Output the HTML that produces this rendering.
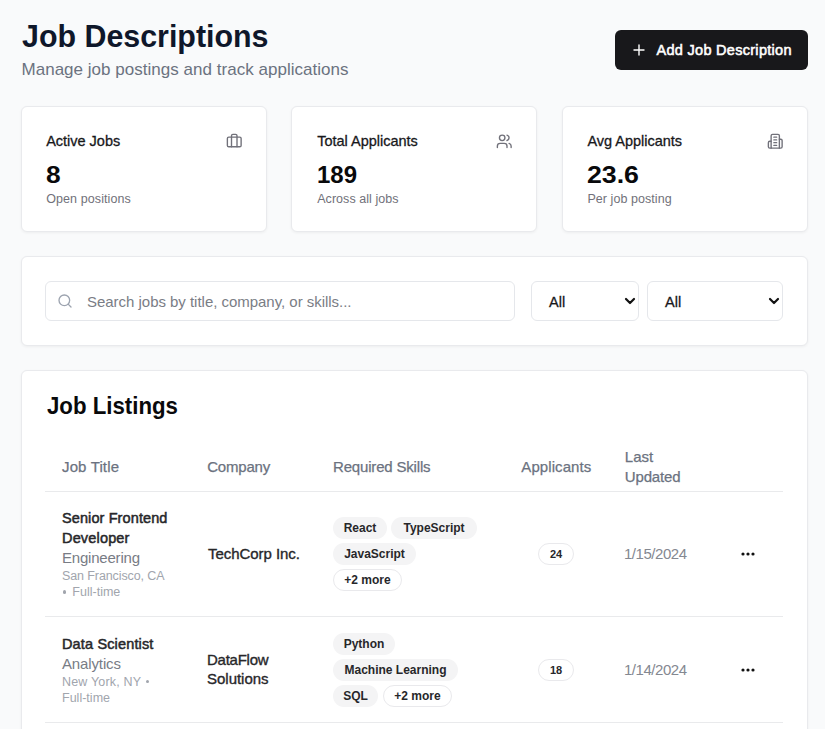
<!DOCTYPE html>
<html><head><meta charset="utf-8">
<style>
*{box-sizing:border-box;margin:0;padding:0}
html,body{width:825px;height:729px;overflow:hidden;background:#f9fafb;font-family:"Liberation Sans",sans-serif;color:#111827}
body{position:relative}
.abs{position:absolute}
.box{position:absolute}
.t{position:absolute;white-space:nowrap}
.card{position:absolute;background:#fff;border:1px solid #e9eaed;border-radius:6px;box-shadow:0 1px 3px rgba(0,0,0,0.05)}
.inp{position:absolute;border:1px solid #e5e7eb;border-radius:6px;background:#fff}
.b{position:absolute;height:22px;border-radius:11px;background:#f4f4f5;font-size:12px;font-weight:bold;color:#27272a;line-height:22px;text-align:center;white-space:nowrap}
.bo{background:#fff;border:1px solid #e9e9ec;line-height:20px}
</style></head>
<body>
<div class="t" style="left:21.50px;top:18px;font-size:31.5px;line-height:36px;font-weight:bold;color:#0f172a;transform:scaleX(0.9646);transform-origin:0.00px 0;">Job Descriptions</div>
<div class="t" style="left:21.50px;top:60px;font-size:17px;line-height:19px;color:#6b7280;letter-spacing:0.023px;">Manage job postings and track applications</div>
<div class="box" style="left:615px;top:30px;width:193px;height:40px;background:#18181b;border-radius:6px"></div>
<svg class="abs" style="left:633px;top:44px" width="12" height="12" viewBox="0 0 12 12"><path d="M6 1v10M1 6h10" stroke="#fff" stroke-width="1.4" stroke-linecap="round"/></svg>
<div class="t" style="left:656.50px;top:42px;font-size:14.5px;line-height:16px;color:#ffffff;letter-spacing:0.290px;-webkit-text-stroke:0.55px #ffffff;">Add Job Description</div>
<div class="card" style="left:21px;top:106px;width:246px;height:126px"></div>
<div class="t" style="left:46.20px;top:133px;font-size:14.5px;line-height:16px;color:#18181b;letter-spacing:-0.013px;-webkit-text-stroke:0.3px #18181b;">Active Jobs</div>
<div class="t" style="left:46.20px;top:161px;font-size:24px;line-height:27px;font-weight:bold;color:#09090b;transform:scaleX(1.0961);transform-origin:0.00px 0;">8</div>
<div class="t" style="left:46.20px;top:192px;font-size:12.5px;line-height:14px;color:#71717a;letter-spacing:0.094px;">Open positions</div>
<svg class="abs" style="left:226px;top:132.5px" width="16.5" height="16.5" viewBox="0 0 24 24" fill="none" stroke="#71717a" stroke-width="2" stroke-linecap="round" stroke-linejoin="round"><path d="M16 20V4a2 2 0 0 0-2-2h-4a2 2 0 0 0-2 2v16"/><rect width="20" height="14" x="2" y="6" rx="2"/></svg>
<div class="card" style="left:291px;top:106px;width:246px;height:126px"></div>
<div class="t" style="left:317.20px;top:133px;font-size:14.5px;line-height:16px;color:#18181b;letter-spacing:-0.012px;-webkit-text-stroke:0.3px #18181b;">Total Applicants</div>
<div class="t" style="left:317.20px;top:161px;font-size:24px;line-height:27px;font-weight:bold;color:#09090b;transform:scaleX(0.9995);transform-origin:0.00px 0;">189</div>
<div class="t" style="left:317.20px;top:192px;font-size:12.5px;line-height:14px;color:#71717a;letter-spacing:0.058px;">Across all jobs</div>
<svg class="abs" style="left:496px;top:132.5px" width="16.5" height="16.5" viewBox="0 0 24 24" fill="none" stroke="#71717a" stroke-width="2" stroke-linecap="round" stroke-linejoin="round"><path d="M16 21v-2a4 4 0 0 0-4-4H6a4 4 0 0 0-4 4v2"/><circle cx="9" cy="7" r="4"/><path d="M22 21v-2a4 4 0 0 0-3-3.87"/><path d="M16 3.13a4 4 0 0 1 0 7.75"/></svg>
<div class="card" style="left:562px;top:106px;width:246px;height:126px"></div>
<div class="t" style="left:587.40px;top:133px;font-size:14.5px;line-height:16px;color:#18181b;letter-spacing:-0.020px;-webkit-text-stroke:0.3px #18181b;">Avg Applicants</div>
<div class="t" style="left:587.40px;top:161px;font-size:24px;line-height:27px;font-weight:bold;color:#09090b;transform:scaleX(1.1125);transform-origin:0.00px 0;">23.6</div>
<div class="t" style="left:587.40px;top:192px;font-size:12.5px;line-height:14px;color:#71717a;letter-spacing:0.059px;">Per job posting</div>
<svg class="abs" style="left:767px;top:132.5px" width="16.5" height="16.5" viewBox="0 0 24 24" fill="none" stroke="#71717a" stroke-width="2" stroke-linecap="round" stroke-linejoin="round"><path d="M6 22V4a2 2 0 0 1 2-2h8a2 2 0 0 1 2 2v18Z"/><path d="M6 12H4a2 2 0 0 0-2 2v6a2 2 0 0 0 2 2h2"/><path d="M18 9h2a2 2 0 0 1 2 2v9a2 2 0 0 1-2 2h-2"/><path d="M10 6h4"/><path d="M10 10h4"/><path d="M10 14h4"/><path d="M10 18h4"/></svg>
<div class="card" style="left:21px;top:256px;width:787px;height:90px"></div>
<div class="inp" style="left:45px;top:281px;width:470px;height:40px"></div>
<svg class="abs" style="left:57px;top:293px" width="16" height="16" viewBox="0 0 24 24" fill="none" stroke="#9ca3af" stroke-width="2" stroke-linecap="round"><circle cx="11" cy="11" r="8"/><path d="m21 21-4.3-4.3"/></svg>
<div class="t" style="left:87.00px;top:293px;font-size:15px;line-height:17px;color:#7a7d85;letter-spacing:-0.027px;">Search jobs by title, company, or skills...</div>
<div class="inp" style="left:531px;top:281px;width:108px;height:40px"></div>
<div class="t" style="left:549.00px;top:294px;font-size:14.5px;line-height:16px;color:#18181b;-webkit-text-stroke:0.3px #18181b;">All</div>
<svg class="abs" style="left:624px;top:296px" width="12" height="10" viewBox="0 0 12 10"><path d="M2 3l4 4 4-4" fill="none" stroke="#111" stroke-width="2.2" stroke-linecap="round" stroke-linejoin="round"/></svg>
<div class="inp" style="left:647px;top:281px;width:136px;height:40px"></div>
<div class="t" style="left:665.00px;top:294px;font-size:14.5px;line-height:16px;color:#18181b;-webkit-text-stroke:0.3px #18181b;">All</div>
<svg class="abs" style="left:768px;top:296px" width="12" height="10" viewBox="0 0 12 10"><path d="M2 3l4 4 4-4" fill="none" stroke="#111" stroke-width="2.2" stroke-linecap="round" stroke-linejoin="round"/></svg>
<div class="card" style="left:21px;top:370px;width:787px;height:420px"></div>
<div class="t" style="left:47.00px;top:392px;font-size:24px;line-height:27px;font-weight:bold;color:#09090b;transform:scaleX(0.9267);transform-origin:0.00px 0;">Job Listings</div>
<div class="t" style="left:62.00px;top:458px;font-size:15px;line-height:17px;color:#6b7280;letter-spacing:0.141px;-webkit-text-stroke:0.25px #6b7280;">Job Title</div>
<div class="t" style="left:207.20px;top:458px;font-size:15px;line-height:17px;color:#6b7280;letter-spacing:-0.200px;-webkit-text-stroke:0.25px #6b7280;">Company</div>
<div class="t" style="left:333.00px;top:458px;font-size:15px;line-height:17px;color:#6b7280;letter-spacing:-0.175px;-webkit-text-stroke:0.25px #6b7280;">Required Skills</div>
<div class="t" style="left:521.30px;top:458px;font-size:15px;line-height:17px;color:#6b7280;letter-spacing:0.086px;-webkit-text-stroke:0.25px #6b7280;">Applicants</div>
<div class="t" style="left:624.80px;top:448px;font-size:15px;line-height:17px;color:#6b7280;-webkit-text-stroke:0.25px #6b7280;">Last</div>
<div class="t" style="left:624.80px;top:468px;font-size:15px;line-height:17px;color:#6b7280;letter-spacing:-0.150px;-webkit-text-stroke:0.25px #6b7280;">Updated</div>
<div class="box" style="left:45px;top:491px;width:738px;height:1px;background:#e9eaec"></div>
<div class="box" style="left:45px;top:616px;width:738px;height:1px;background:#e9eaec"></div>
<div class="box" style="left:45px;top:722px;width:738px;height:1px;background:#e9eaec"></div>
<div class="t" style="left:62.00px;top:510px;font-size:14.5px;line-height:16px;color:#27272a;letter-spacing:0.103px;-webkit-text-stroke:0.5px #27272a;">Senior Frontend</div>
<div class="t" style="left:62.00px;top:530px;font-size:14.5px;line-height:16px;color:#27272a;letter-spacing:0.165px;-webkit-text-stroke:0.5px #27272a;">Developer</div>
<div class="t" style="left:62.00px;top:549px;font-size:15px;line-height:17px;color:#787c85;letter-spacing:-0.206px;">Engineering</div>
<div class="t" style="left:62.00px;top:569px;font-size:12.5px;line-height:14px;color:#a1a5ad;letter-spacing:-0.101px;">San Francisco, CA</div>
<div class="box" style="left:62.8px;top:590.3px;width:3.5px;height:3.5px;border-radius:50%;background:#a1a5ad"></div>
<div class="t" style="left:72.30px;top:585px;font-size:12.5px;line-height:14px;color:#a1a5ad;letter-spacing:0.012px;">Full-time</div>
<div class="t" style="left:208.00px;top:545px;font-size:15px;line-height:17px;color:#27272a;letter-spacing:-0.046px;-webkit-text-stroke:0.35px #27272a;">TechCorp Inc.</div>
<div class="b" style="left:333px;top:517px;width:54px;font-size:12px">React</div>
<div class="b" style="left:391px;top:517px;width:86px;font-size:12px">TypeScript</div>
<div class="b" style="left:333px;top:543px;width:83px;font-size:12px">JavaScript</div>
<div class="b bo" style="left:333px;top:569px;width:69px;font-size:12px">+2 more</div>
<div class="b bo" style="left:538px;top:543px;width:36px;font-size:11px">24</div>
<div class="t" style="left:624.00px;top:545px;font-size:15px;line-height:17px;color:#848891;letter-spacing:-0.469px;">1/15/2024</div>
<svg class="abs" style="left:740.5px;top:551px" width="14" height="6" viewBox="0 0 14 6"><circle cx="2" cy="3" r="1.6" fill="#111"/><circle cx="7" cy="3" r="1.6" fill="#111"/><circle cx="12" cy="3" r="1.6" fill="#111"/></svg>
<div class="t" style="left:62.00px;top:636px;font-size:14.5px;line-height:16px;color:#27272a;letter-spacing:0.149px;-webkit-text-stroke:0.5px #27272a;">Data Scientist</div>
<div class="t" style="left:62.00px;top:655px;font-size:15px;line-height:17px;color:#787c85;letter-spacing:-0.130px;">Analytics</div>
<div class="t" style="left:62.00px;top:675px;font-size:12.5px;line-height:14px;color:#a1a5ad;letter-spacing:0.170px;">New York, NY</div>
<div class="box" style="left:145.6px;top:679.6px;width:3.4px;height:3.4px;border-radius:50%;background:#a1a5ad"></div>
<div class="t" style="left:62.00px;top:691px;font-size:12.5px;line-height:14px;color:#a1a5ad;letter-spacing:0.012px;">Full-time</div>
<div class="t" style="left:207.00px;top:651px;font-size:15px;line-height:17px;color:#27272a;letter-spacing:-0.259px;-webkit-text-stroke:0.35px #27272a;">DataFlow</div>
<div class="t" style="left:207.00px;top:670px;font-size:15px;line-height:17px;color:#27272a;letter-spacing:-0.016px;-webkit-text-stroke:0.35px #27272a;">Solutions</div>
<div class="b" style="left:333px;top:633px;width:62px;font-size:12px">Python</div>
<div class="b" style="left:333px;top:659px;width:125px;font-size:12px">Machine Learning</div>
<div class="b" style="left:333px;top:685px;width:45px;font-size:12px">SQL</div>
<div class="b bo" style="left:383px;top:685px;width:69px;font-size:12px">+2 more</div>
<div class="b bo" style="left:538px;top:659px;width:36px;font-size:11px">18</div>
<div class="t" style="left:624.00px;top:661px;font-size:15px;line-height:17px;color:#848891;letter-spacing:-0.469px;">1/14/2024</div>
<svg class="abs" style="left:740.5px;top:667px" width="14" height="6" viewBox="0 0 14 6"><circle cx="2" cy="3" r="1.6" fill="#111"/><circle cx="7" cy="3" r="1.6" fill="#111"/><circle cx="12" cy="3" r="1.6" fill="#111"/></svg>
</body></html>
